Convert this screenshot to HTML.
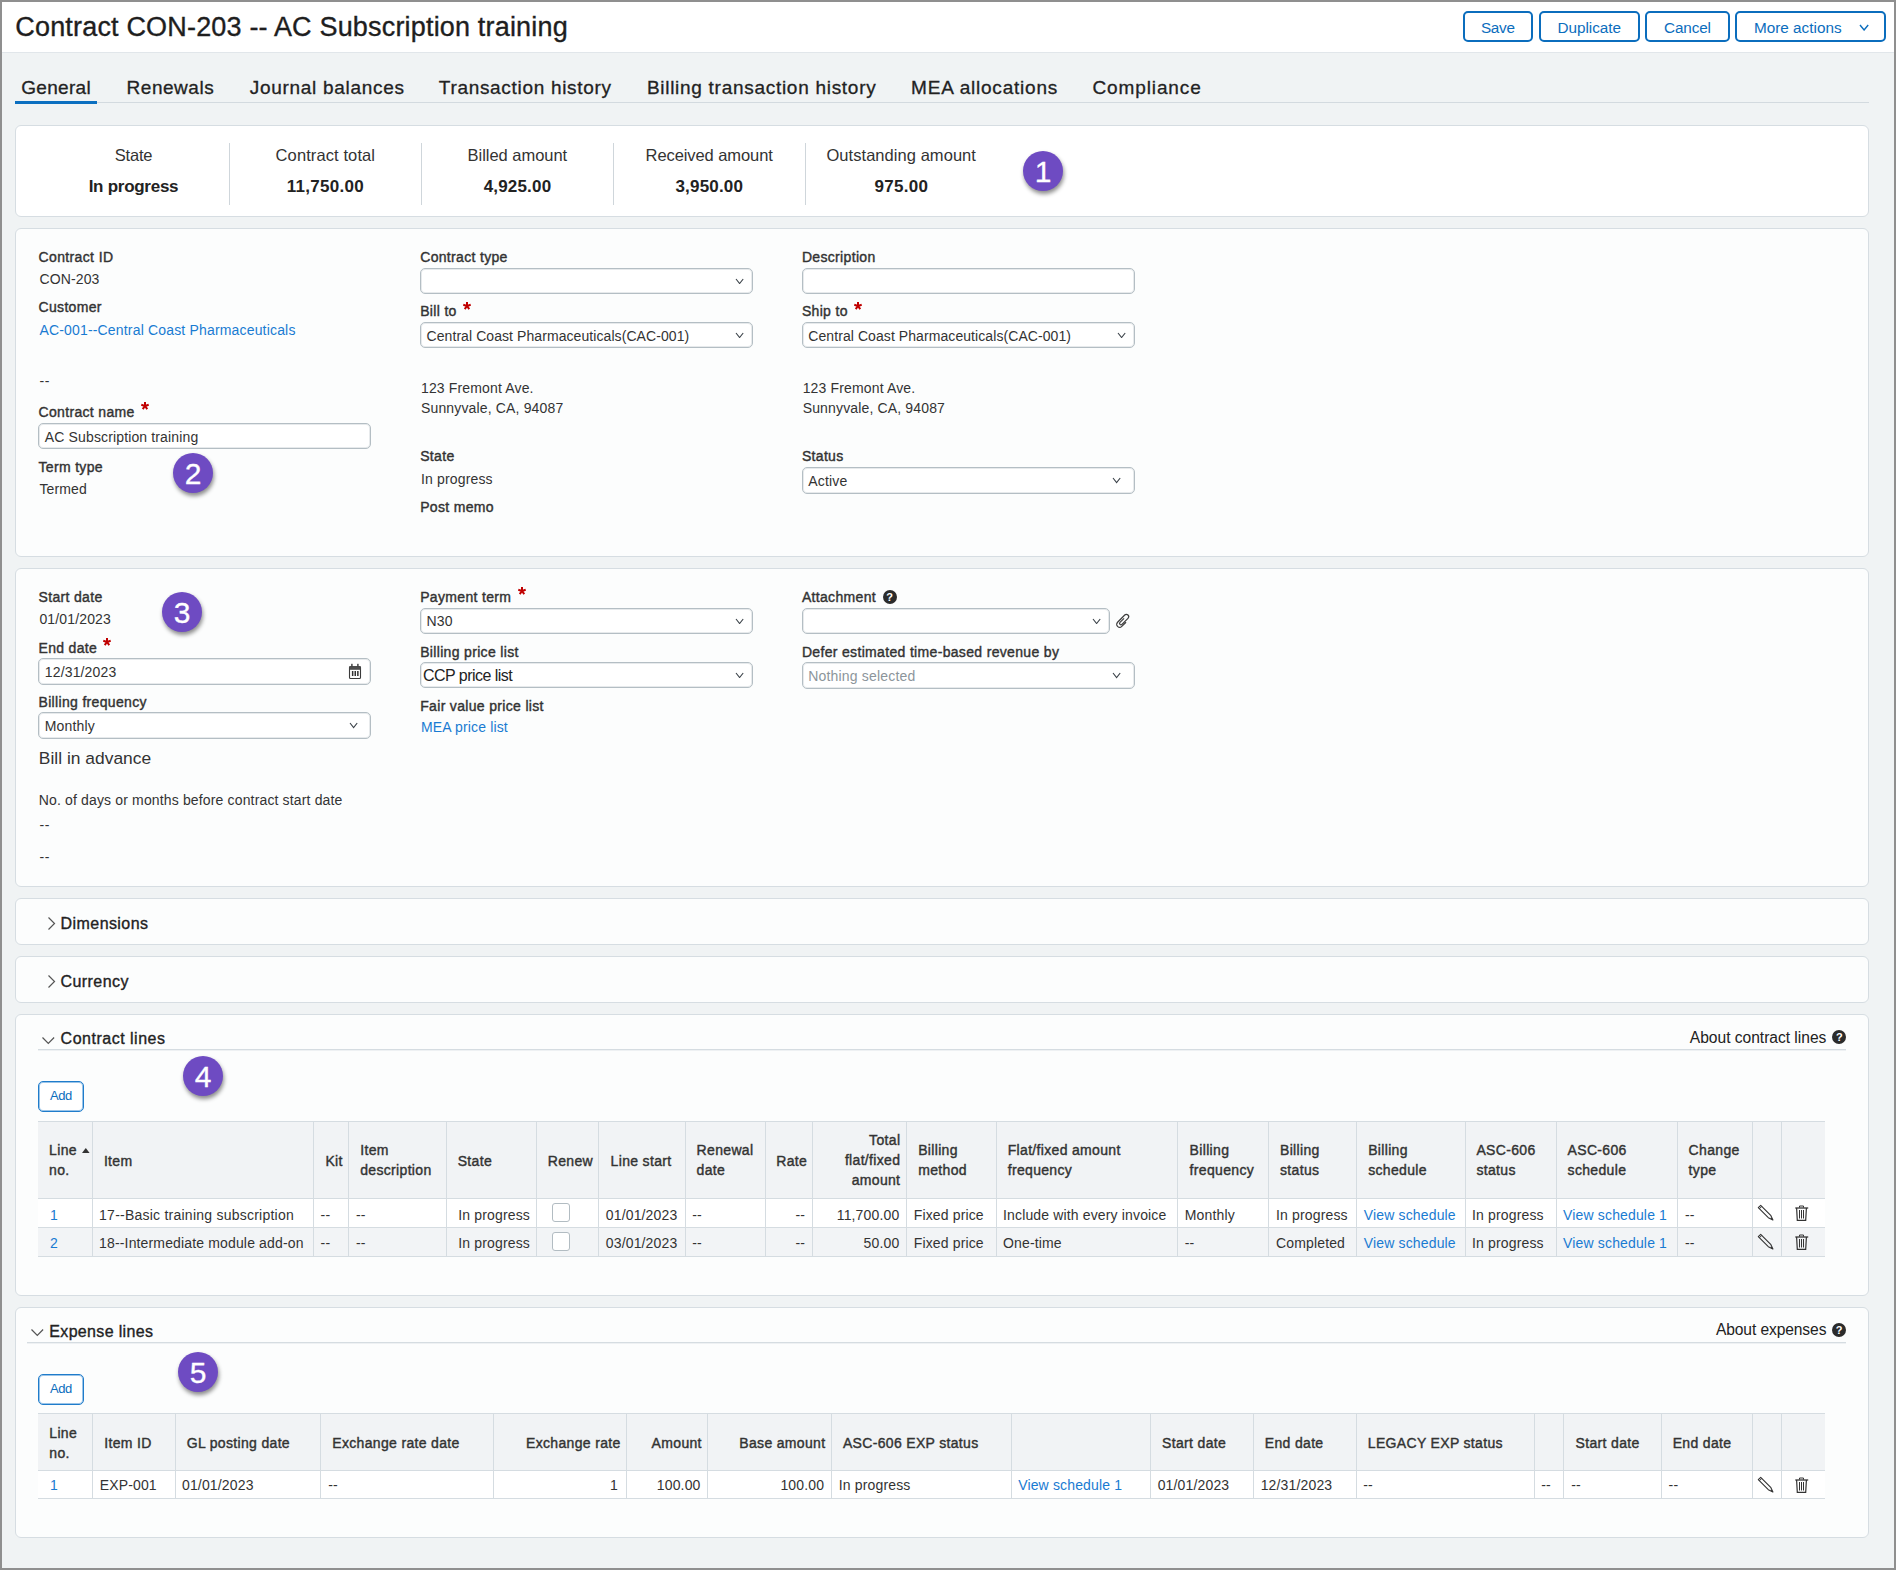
<!DOCTYPE html>
<html><head><meta charset="utf-8"><style>
html,body{margin:0;padding:0;}
body{width:1896px;height:1570px;overflow:hidden;position:relative;background:#8f8f8f;font-family:'Liberation Sans', sans-serif;}
.t{position:absolute;white-space:nowrap;}
</style></head><body>
<div style="position:absolute;left:2px;top:2px;width:1892px;height:1566px;background:#f0f3f4"></div>
<div style="position:absolute;left:2px;top:2px;width:1892px;height:50px;background:#ffffff"></div>
<div style="position:absolute;left:2px;top:52px;width:1892px;height:1px;background:#e1e6ea"></div>
<div style="position:absolute;left:1463px;top:11px;width:70px;height:31px;box-sizing:border-box;border:2px solid #0b6dbd;border-radius:5px;background:#fff"></div>
<div style="position:absolute;left:1539px;top:11px;width:101px;height:31px;box-sizing:border-box;border:2px solid #0b6dbd;border-radius:5px;background:#fff"></div>
<div style="position:absolute;left:1645px;top:11px;width:85px;height:31px;box-sizing:border-box;border:2px solid #0b6dbd;border-radius:5px;background:#fff"></div>
<div style="position:absolute;left:1735px;top:11px;width:151px;height:31px;box-sizing:border-box;border:2px solid #0b6dbd;border-radius:5px;background:#fff"></div>
<svg style="position:absolute;left:1858.7px;top:23.8px" width="10.2" height="7"><polyline points="1,1 5.1,6 9.2,1" fill="none" stroke="#0b6dbd" stroke-width="1.4"/></svg>
<div style="position:absolute;left:15px;top:102px;width:1854px;height:1px;background:#d3dadf"></div>
<div style="position:absolute;left:15px;top:101px;width:82px;height:3px;background:#0b6fc0"></div>
<div style="position:absolute;left:15px;top:125px;width:1854px;height:92px;box-sizing:border-box;background:#ffffff;border:1px solid #d6dde2;border-radius:6px"></div>
<div style="position:absolute;left:229px;top:143px;width:1px;height:62px;background:#cfd6db"></div>
<div style="position:absolute;left:421px;top:143px;width:1px;height:62px;background:#cfd6db"></div>
<div style="position:absolute;left:613px;top:143px;width:1px;height:62px;background:#cfd6db"></div>
<div style="position:absolute;left:805px;top:143px;width:1px;height:62px;background:#cfd6db"></div>
<div style="position:absolute;left:1023px;top:151px;width:40px;height:40px;border-radius:50%;background:#6e4bc2;box-shadow:1px 3px 4px rgba(0,0,0,0.45)"></div>
<div style="position:absolute;left:15px;top:228px;width:1854px;height:329px;box-sizing:border-box;background:#fcfdfd;border:1px solid #d6dde2;border-radius:6px"></div>
<svg style="position:absolute;left:139.8px;top:401.3px" width="10" height="10"><line x1="5" y1="5" x2="5.00" y2="1.10" stroke="#c00000" stroke-width="2" stroke-linecap="butt"/><line x1="5" y1="5" x2="8.71" y2="3.79" stroke="#c00000" stroke-width="2" stroke-linecap="butt"/><line x1="5" y1="5" x2="7.29" y2="8.16" stroke="#c00000" stroke-width="2" stroke-linecap="butt"/><line x1="5" y1="5" x2="2.71" y2="8.16" stroke="#c00000" stroke-width="2" stroke-linecap="butt"/><line x1="5" y1="5" x2="1.29" y2="3.79" stroke="#c00000" stroke-width="2" stroke-linecap="butt"/></svg>
<div style="position:absolute;left:38px;top:423px;width:333px;height:26px;box-sizing:border-box;background:#fff;border:1px solid #b4bec4;border-radius:5px;box-shadow:inset 0 0 0 1px rgba(185,194,200,0.35)"></div>
<div style="position:absolute;left:173px;top:452.6px;width:40px;height:40px;border-radius:50%;background:#6e4bc2;box-shadow:1px 3px 4px rgba(0,0,0,0.45)"></div>
<div style="position:absolute;left:420px;top:268px;width:333px;height:26px;box-sizing:border-box;background:#fff;border:1px solid #b4bec4;border-radius:5px;box-shadow:inset 0 0 0 1px rgba(185,194,200,0.35)"></div>
<svg style="position:absolute;left:734.8px;top:277.8px" width="9.2" height="6.5"><polyline points="1,1 4.6,5.5 8.2,1" fill="none" stroke="#3a4148" stroke-width="1.1"/></svg>
<svg style="position:absolute;left:461.9px;top:300.5px" width="10" height="10"><line x1="5" y1="5" x2="5.00" y2="1.10" stroke="#c00000" stroke-width="2" stroke-linecap="butt"/><line x1="5" y1="5" x2="8.71" y2="3.79" stroke="#c00000" stroke-width="2" stroke-linecap="butt"/><line x1="5" y1="5" x2="7.29" y2="8.16" stroke="#c00000" stroke-width="2" stroke-linecap="butt"/><line x1="5" y1="5" x2="2.71" y2="8.16" stroke="#c00000" stroke-width="2" stroke-linecap="butt"/><line x1="5" y1="5" x2="1.29" y2="3.79" stroke="#c00000" stroke-width="2" stroke-linecap="butt"/></svg>
<div style="position:absolute;left:420px;top:322px;width:333px;height:26px;box-sizing:border-box;background:#fff;border:1px solid #b4bec4;border-radius:5px;box-shadow:inset 0 0 0 1px rgba(185,194,200,0.35)"></div>
<svg style="position:absolute;left:734.8px;top:331.8px" width="9.2" height="6.5"><polyline points="1,1 4.6,5.5 8.2,1" fill="none" stroke="#3a4148" stroke-width="1.1"/></svg>
<div style="position:absolute;left:802px;top:268px;width:333px;height:26px;box-sizing:border-box;background:#fff;border:1px solid #b4bec4;border-radius:5px;box-shadow:inset 0 0 0 1px rgba(185,194,200,0.35)"></div>
<svg style="position:absolute;left:852.6px;top:300.5px" width="10" height="10"><line x1="5" y1="5" x2="5.00" y2="1.10" stroke="#c00000" stroke-width="2" stroke-linecap="butt"/><line x1="5" y1="5" x2="8.71" y2="3.79" stroke="#c00000" stroke-width="2" stroke-linecap="butt"/><line x1="5" y1="5" x2="7.29" y2="8.16" stroke="#c00000" stroke-width="2" stroke-linecap="butt"/><line x1="5" y1="5" x2="2.71" y2="8.16" stroke="#c00000" stroke-width="2" stroke-linecap="butt"/><line x1="5" y1="5" x2="1.29" y2="3.79" stroke="#c00000" stroke-width="2" stroke-linecap="butt"/></svg>
<div style="position:absolute;left:802px;top:322px;width:333px;height:26px;box-sizing:border-box;background:#fff;border:1px solid #b4bec4;border-radius:5px;box-shadow:inset 0 0 0 1px rgba(185,194,200,0.35)"></div>
<svg style="position:absolute;left:1116.5px;top:331.8px" width="9.2" height="6.5"><polyline points="1,1 4.6,5.5 8.2,1" fill="none" stroke="#3a4148" stroke-width="1.1"/></svg>
<div style="position:absolute;left:802px;top:467px;width:333px;height:27px;box-sizing:border-box;background:#fff;border:1px solid #b4bec4;border-radius:5px;box-shadow:inset 0 0 0 1px rgba(185,194,200,0.35)"></div>
<svg style="position:absolute;left:1112px;top:477.3px" width="9.2" height="6.5"><polyline points="1,1 4.6,5.5 8.2,1" fill="none" stroke="#3a4148" stroke-width="1.1"/></svg>
<div style="position:absolute;left:15px;top:568px;width:1854px;height:319px;box-sizing:border-box;background:#fcfdfd;border:1px solid #d6dde2;border-radius:6px"></div>
<div style="position:absolute;left:162px;top:591.5px;width:40px;height:40px;border-radius:50%;background:#6e4bc2;box-shadow:1px 3px 4px rgba(0,0,0,0.45)"></div>
<svg style="position:absolute;left:101.5px;top:637.3000000000001px" width="10" height="10"><line x1="5" y1="5" x2="5.00" y2="1.10" stroke="#c00000" stroke-width="2" stroke-linecap="butt"/><line x1="5" y1="5" x2="8.71" y2="3.79" stroke="#c00000" stroke-width="2" stroke-linecap="butt"/><line x1="5" y1="5" x2="7.29" y2="8.16" stroke="#c00000" stroke-width="2" stroke-linecap="butt"/><line x1="5" y1="5" x2="2.71" y2="8.16" stroke="#c00000" stroke-width="2" stroke-linecap="butt"/><line x1="5" y1="5" x2="1.29" y2="3.79" stroke="#c00000" stroke-width="2" stroke-linecap="butt"/></svg>
<div style="position:absolute;left:38px;top:658px;width:333px;height:27px;box-sizing:border-box;background:#fff;border:1px solid #b4bec4;border-radius:5px;box-shadow:inset 0 0 0 1px rgba(185,194,200,0.35)"></div>
<svg style="position:absolute;left:344px;top:660px" width="22" height="24" viewBox="0 0 22 24">
<rect x="5.5" y="6.5" width="11" height="12" rx="1" fill="none" stroke="#3a3a3a" stroke-width="1.1"/>
<rect x="5.5" y="6" width="11" height="3.8" fill="#4d4d4d"/>
<rect x="7.2" y="3.8" width="1.4" height="2.8" fill="#3a3a3a"/><rect x="13.2" y="3.8" width="1.4" height="2.8" fill="#3a3a3a"/>
<rect x="7.9" y="11" width="1.5" height="5" fill="#333"/><rect x="10.5" y="11" width="1.5" height="5" fill="#333"/><rect x="13.1" y="11" width="1.5" height="5" fill="#333"/>
</svg>
<div style="position:absolute;left:38px;top:712px;width:333px;height:27px;box-sizing:border-box;background:#fff;border:1px solid #b4bec4;border-radius:5px;box-shadow:inset 0 0 0 1px rgba(185,194,200,0.35)"></div>
<svg style="position:absolute;left:348.8px;top:722.3px" width="9.2" height="6.5"><polyline points="1,1 4.6,5.5 8.2,1" fill="none" stroke="#3a4148" stroke-width="1.1"/></svg>
<svg style="position:absolute;left:516.5px;top:586.2px" width="10" height="10"><line x1="5" y1="5" x2="5.00" y2="1.10" stroke="#c00000" stroke-width="2" stroke-linecap="butt"/><line x1="5" y1="5" x2="8.71" y2="3.79" stroke="#c00000" stroke-width="2" stroke-linecap="butt"/><line x1="5" y1="5" x2="7.29" y2="8.16" stroke="#c00000" stroke-width="2" stroke-linecap="butt"/><line x1="5" y1="5" x2="2.71" y2="8.16" stroke="#c00000" stroke-width="2" stroke-linecap="butt"/><line x1="5" y1="5" x2="1.29" y2="3.79" stroke="#c00000" stroke-width="2" stroke-linecap="butt"/></svg>
<div style="position:absolute;left:420px;top:608px;width:333px;height:26px;box-sizing:border-box;background:#fff;border:1px solid #b4bec4;border-radius:5px;box-shadow:inset 0 0 0 1px rgba(185,194,200,0.35)"></div>
<svg style="position:absolute;left:734.8px;top:617.8px" width="9.2" height="6.5"><polyline points="1,1 4.6,5.5 8.2,1" fill="none" stroke="#3a4148" stroke-width="1.1"/></svg>
<div style="position:absolute;left:420px;top:662px;width:333px;height:26px;box-sizing:border-box;background:#fff;border:1px solid #b4bec4;border-radius:5px;box-shadow:inset 0 0 0 1px rgba(185,194,200,0.35)"></div>
<svg style="position:absolute;left:734.8px;top:671.8px" width="9.2" height="6.5"><polyline points="1,1 4.6,5.5 8.2,1" fill="none" stroke="#3a4148" stroke-width="1.1"/></svg>
<div style="position:absolute;left:882.5px;top:590px;width:14px;height:14px;border-radius:50%;background:#2b2b2b"></div>
<div style="position:absolute;left:802px;top:608px;width:307.5px;height:26px;box-sizing:border-box;background:#fff;border:1px solid #b4bec4;border-radius:5px;box-shadow:inset 0 0 0 1px rgba(185,194,200,0.35)"></div>
<svg style="position:absolute;left:1092.3px;top:617.8px" width="9.2" height="6.5"><polyline points="1,1 4.6,5.5 8.2,1" fill="none" stroke="#3a4148" stroke-width="1.1"/></svg>
<svg style="position:absolute;left:1110px;top:606px" width="26" height="28" viewBox="0 0 26 28">
<path transform="translate(13,15) rotate(45) scale(0.92) translate(-3.25,-8.4)" d="M6.5,7 V13.5 A3.25,3.25 0 0 1 0,13.5 V2.5 A2.5,2.5 0 0 1 5,2.5 V11.8 A1.5,1.5 0 0 1 2,11.8 V5.5" fill="none" stroke="#3d3d3d" stroke-width="1.3"/>
</svg>
<div style="position:absolute;left:802px;top:662px;width:333px;height:27px;box-sizing:border-box;background:#fff;border:1px solid #b4bec4;border-radius:5px;box-shadow:inset 0 0 0 1px rgba(185,194,200,0.35)"></div>
<svg style="position:absolute;left:1112px;top:672.3px" width="9.2" height="6.5"><polyline points="1,1 4.6,5.5 8.2,1" fill="none" stroke="#3a4148" stroke-width="1.1"/></svg>
<div style="position:absolute;left:15px;top:898px;width:1854px;height:47px;box-sizing:border-box;background:#fcfdfd;border:1px solid #d6dde2;border-radius:6px"></div>
<svg style="position:absolute;left:46px;top:916px" width="10" height="16"><polyline points="2.5,1.5 8.5,7.5 2.5,13.5" fill="none" stroke="#555" stroke-width="1.2"/></svg>
<div style="position:absolute;left:15px;top:956px;width:1854px;height:47px;box-sizing:border-box;background:#fcfdfd;border:1px solid #d6dde2;border-radius:6px"></div>
<svg style="position:absolute;left:46px;top:974px" width="10" height="16"><polyline points="2.5,1.5 8.5,7.5 2.5,13.5" fill="none" stroke="#555" stroke-width="1.2"/></svg>
<div style="position:absolute;left:15px;top:1014px;width:1854px;height:282px;box-sizing:border-box;background:#fcfdfd;border:1px solid #d6dde2;border-radius:6px"></div>
<svg style="position:absolute;left:41px;top:1036px" width="15" height="10"><polyline points="1.5,1.5 7.3,7.5 13.1,1.5" fill="none" stroke="#555" stroke-width="1.2"/></svg>
<div style="position:absolute;left:38px;top:1049px;width:1808px;height:1px;background:#d5dce1"></div>
<div style="position:absolute;left:38px;top:1050px;width:1808px;height:1px;background:#eef1f3"></div>
<div style="position:absolute;left:1832.3px;top:1030px;width:14px;height:14px;border-radius:50%;background:#2b2b2b"></div>
<div style="position:absolute;left:183px;top:1056px;width:40px;height:40px;border-radius:50%;background:#6e4bc2;box-shadow:1px 3px 4px rgba(0,0,0,0.45)"></div>
<div style="position:absolute;left:38px;top:1081px;width:46px;height:31px;box-sizing:border-box;border:1px solid #1f7ccb;border-radius:5px;background:#fff;box-shadow:inset 0 0 0 1px rgba(31,124,203,0.45)"></div>
<div style="position:absolute;left:38px;top:1121px;width:1787px;height:77px;background:#f1f3f5"></div>
<div style="position:absolute;left:38px;top:1198px;width:1787px;height:29px;background:#ffffff"></div>
<div style="position:absolute;left:38px;top:1227px;width:1787px;height:29px;background:#f2f4f6"></div>
<div style="position:absolute;left:38px;top:1121px;width:1787px;height:1px;background:#d5dce1"></div>
<div style="position:absolute;left:38px;top:1198px;width:1787px;height:1px;background:#d5dce1"></div>
<div style="position:absolute;left:38px;top:1227px;width:1787px;height:1px;background:#d5dce1"></div>
<div style="position:absolute;left:38px;top:1256px;width:1787px;height:1px;background:#d5dce1"></div>
<div style="position:absolute;left:92px;top:1121px;width:1px;height:135px;background:#d5dce1"></div>
<div style="position:absolute;left:313px;top:1121px;width:1px;height:135px;background:#d5dce1"></div>
<div style="position:absolute;left:348px;top:1121px;width:1px;height:135px;background:#d5dce1"></div>
<div style="position:absolute;left:446px;top:1121px;width:1px;height:135px;background:#d5dce1"></div>
<div style="position:absolute;left:536px;top:1121px;width:1px;height:135px;background:#d5dce1"></div>
<div style="position:absolute;left:598px;top:1121px;width:1px;height:135px;background:#d5dce1"></div>
<div style="position:absolute;left:685px;top:1121px;width:1px;height:135px;background:#d5dce1"></div>
<div style="position:absolute;left:765px;top:1121px;width:1px;height:135px;background:#d5dce1"></div>
<div style="position:absolute;left:812px;top:1121px;width:1px;height:135px;background:#d5dce1"></div>
<div style="position:absolute;left:906px;top:1121px;width:1px;height:135px;background:#d5dce1"></div>
<div style="position:absolute;left:996px;top:1121px;width:1px;height:135px;background:#d5dce1"></div>
<div style="position:absolute;left:1177px;top:1121px;width:1px;height:135px;background:#d5dce1"></div>
<div style="position:absolute;left:1268px;top:1121px;width:1px;height:135px;background:#d5dce1"></div>
<div style="position:absolute;left:1356px;top:1121px;width:1px;height:135px;background:#d5dce1"></div>
<div style="position:absolute;left:1465px;top:1121px;width:1px;height:135px;background:#d5dce1"></div>
<div style="position:absolute;left:1556px;top:1121px;width:1px;height:135px;background:#d5dce1"></div>
<div style="position:absolute;left:1677px;top:1121px;width:1px;height:135px;background:#d5dce1"></div>
<div style="position:absolute;left:1752px;top:1121px;width:1px;height:135px;background:#d5dce1"></div>
<div style="position:absolute;left:1781px;top:1121px;width:1px;height:135px;background:#d5dce1"></div>
<svg style="position:absolute;left:81px;top:1147px" width="10" height="7"><polygon points="1,6 4.8,1 8.6,6" fill="#333"/></svg>
<div style="position:absolute;left:552px;top:1203px;width:18px;height:19px;box-sizing:border-box;border:1.5px solid #b2bcc2;border-radius:3px;background:#fff"></div>
<svg style="position:absolute;left:1757px;top:1204px" width="17" height="17" viewBox="0 0 17 17"><path d="M3.7,1.3 L13.7,11.3 L15.9,15.9 L11.3,13.7 L1.3,3.7 Z" fill="none" stroke="#333" stroke-width="1.1" stroke-linejoin="round"/><path d="M2.4,4.8 L4.8,2.4" stroke="#333" stroke-width="1"/><path d="M13.9,14.2 L15.9,15.9 L14.2,13.9 Z" fill="#333" stroke="#333" stroke-width="0.8"/></svg>
<svg style="position:absolute;left:1795px;top:1205px" width="14" height="17" viewBox="0 0 14 17"><path d="M0.3,3 H13.2" stroke="#333" stroke-width="1.3"/><path d="M4.5,2.6 V1 H8.5 V2.6" fill="none" stroke="#333" stroke-width="1"/><path d="M1.6,3 L2.3,15.4 H10.7 L11.4,3" fill="none" stroke="#333" stroke-width="1.2"/><path d="M4.5,5 V13.5 M6.5,5 V13.5 M8.5,5 V13.5" stroke="#333" stroke-width="1"/></svg>
<div style="position:absolute;left:552px;top:1232px;width:18px;height:19px;box-sizing:border-box;border:1.5px solid #b2bcc2;border-radius:3px;background:#fff"></div>
<svg style="position:absolute;left:1757px;top:1233px" width="17" height="17" viewBox="0 0 17 17"><path d="M3.7,1.3 L13.7,11.3 L15.9,15.9 L11.3,13.7 L1.3,3.7 Z" fill="none" stroke="#333" stroke-width="1.1" stroke-linejoin="round"/><path d="M2.4,4.8 L4.8,2.4" stroke="#333" stroke-width="1"/><path d="M13.9,14.2 L15.9,15.9 L14.2,13.9 Z" fill="#333" stroke="#333" stroke-width="0.8"/></svg>
<svg style="position:absolute;left:1795px;top:1234px" width="14" height="17" viewBox="0 0 14 17"><path d="M0.3,3 H13.2" stroke="#333" stroke-width="1.3"/><path d="M4.5,2.6 V1 H8.5 V2.6" fill="none" stroke="#333" stroke-width="1"/><path d="M1.6,3 L2.3,15.4 H10.7 L11.4,3" fill="none" stroke="#333" stroke-width="1.2"/><path d="M4.5,5 V13.5 M6.5,5 V13.5 M8.5,5 V13.5" stroke="#333" stroke-width="1"/></svg>
<div style="position:absolute;left:15px;top:1307px;width:1854px;height:231px;box-sizing:border-box;background:#fcfdfd;border:1px solid #d6dde2;border-radius:6px"></div>
<svg style="position:absolute;left:30px;top:1328px" width="15" height="10"><polyline points="1.5,1.5 7.3,7.5 13.1,1.5" fill="none" stroke="#555" stroke-width="1.2"/></svg>
<div style="position:absolute;left:27px;top:1342px;width:1819px;height:1px;background:#d5dce1"></div>
<div style="position:absolute;left:27px;top:1343px;width:1819px;height:1px;background:#eef1f3"></div>
<div style="position:absolute;left:1832.2px;top:1323px;width:14px;height:14px;border-radius:50%;background:#2b2b2b"></div>
<div style="position:absolute;left:178px;top:1352px;width:40px;height:40px;border-radius:50%;background:#6e4bc2;box-shadow:1px 3px 4px rgba(0,0,0,0.45)"></div>
<div style="position:absolute;left:38px;top:1374px;width:46px;height:31px;box-sizing:border-box;border:1px solid #1f7ccb;border-radius:5px;background:#fff;box-shadow:inset 0 0 0 1px rgba(31,124,203,0.45)"></div>
<div style="position:absolute;left:38px;top:1413px;width:1787px;height:57px;background:#f1f3f5"></div>
<div style="position:absolute;left:38px;top:1470px;width:1787px;height:28px;background:#ffffff"></div>
<div style="position:absolute;left:38px;top:1413px;width:1787px;height:1px;background:#d5dce1"></div>
<div style="position:absolute;left:38px;top:1470px;width:1787px;height:1px;background:#d5dce1"></div>
<div style="position:absolute;left:38px;top:1498px;width:1787px;height:1px;background:#d5dce1"></div>
<div style="position:absolute;left:92px;top:1413px;width:1px;height:85px;background:#d5dce1"></div>
<div style="position:absolute;left:175px;top:1413px;width:1px;height:85px;background:#d5dce1"></div>
<div style="position:absolute;left:320px;top:1413px;width:1px;height:85px;background:#d5dce1"></div>
<div style="position:absolute;left:493px;top:1413px;width:1px;height:85px;background:#d5dce1"></div>
<div style="position:absolute;left:626px;top:1413px;width:1px;height:85px;background:#d5dce1"></div>
<div style="position:absolute;left:707px;top:1413px;width:1px;height:85px;background:#d5dce1"></div>
<div style="position:absolute;left:831px;top:1413px;width:1px;height:85px;background:#d5dce1"></div>
<div style="position:absolute;left:1011px;top:1413px;width:1px;height:85px;background:#d5dce1"></div>
<div style="position:absolute;left:1150px;top:1413px;width:1px;height:85px;background:#d5dce1"></div>
<div style="position:absolute;left:1253px;top:1413px;width:1px;height:85px;background:#d5dce1"></div>
<div style="position:absolute;left:1356px;top:1413px;width:1px;height:85px;background:#d5dce1"></div>
<div style="position:absolute;left:1534px;top:1413px;width:1px;height:85px;background:#d5dce1"></div>
<div style="position:absolute;left:1563px;top:1413px;width:1px;height:85px;background:#d5dce1"></div>
<div style="position:absolute;left:1661px;top:1413px;width:1px;height:85px;background:#d5dce1"></div>
<div style="position:absolute;left:1752px;top:1413px;width:1px;height:85px;background:#d5dce1"></div>
<div style="position:absolute;left:1781px;top:1413px;width:1px;height:85px;background:#d5dce1"></div>
<svg style="position:absolute;left:1757px;top:1476px" width="17" height="17" viewBox="0 0 17 17"><path d="M3.7,1.3 L13.7,11.3 L15.9,15.9 L11.3,13.7 L1.3,3.7 Z" fill="none" stroke="#333" stroke-width="1.1" stroke-linejoin="round"/><path d="M2.4,4.8 L4.8,2.4" stroke="#333" stroke-width="1"/><path d="M13.9,14.2 L15.9,15.9 L14.2,13.9 Z" fill="#333" stroke="#333" stroke-width="0.8"/></svg>
<svg style="position:absolute;left:1795px;top:1477px" width="14" height="17" viewBox="0 0 14 17"><path d="M0.3,3 H13.2" stroke="#333" stroke-width="1.3"/><path d="M4.5,2.6 V1 H8.5 V2.6" fill="none" stroke="#333" stroke-width="1"/><path d="M1.6,3 L2.3,15.4 H10.7 L11.4,3" fill="none" stroke="#333" stroke-width="1.2"/><path d="M4.5,5 V13.5 M6.5,5 V13.5 M8.5,5 V13.5" stroke="#333" stroke-width="1"/></svg>
<div class="t" style="left:15.30px;top:14px;font-size:27px;line-height:27px;color:#1e1e1e;letter-spacing:0.178px;-webkit-text-stroke:0.35px #1e1e1e;">Contract CON-203 -- AC Subscription training</div>
<div class="t" style="left:1480.90px;top:20px;font-size:15.3px;line-height:15.3px;color:#0b6dbd;letter-spacing:-0.256px;">Save</div>
<div class="t" style="left:1557.40px;top:20px;font-size:15.3px;line-height:15.3px;color:#0b6dbd;letter-spacing:-0.011px;">Duplicate</div>
<div class="t" style="left:1664.10px;top:20px;font-size:15.3px;line-height:15.3px;color:#0b6dbd;letter-spacing:-0.146px;">Cancel</div>
<div class="t" style="left:1753.90px;top:20px;font-size:15.3px;line-height:15.3px;color:#0b6dbd;letter-spacing:0.010px;">More actions</div>
<div class="t" style="left:21.20px;top:78px;font-size:19px;line-height:19px;color:#222222;letter-spacing:0.316px;-webkit-text-stroke:0.3px #222;">General</div>
<div class="t" style="left:126.60px;top:78px;font-size:19px;line-height:19px;color:#222222;letter-spacing:0.524px;-webkit-text-stroke:0.3px #222;">Renewals</div>
<div class="t" style="left:249.80px;top:78px;font-size:19px;line-height:19px;color:#222222;letter-spacing:0.703px;-webkit-text-stroke:0.3px #222;">Journal balances</div>
<div class="t" style="left:438.80px;top:78px;font-size:19px;line-height:19px;color:#222222;letter-spacing:0.688px;-webkit-text-stroke:0.3px #222;">Transaction history</div>
<div class="t" style="left:646.90px;top:78px;font-size:19px;line-height:19px;color:#222222;letter-spacing:0.717px;-webkit-text-stroke:0.3px #222;">Billing transaction history</div>
<div class="t" style="left:911.10px;top:78px;font-size:19px;line-height:19px;color:#222222;letter-spacing:0.787px;-webkit-text-stroke:0.3px #222;">MEA allocations</div>
<div class="t" style="left:1092.50px;top:78px;font-size:19px;line-height:19px;color:#222222;letter-spacing:0.876px;-webkit-text-stroke:0.3px #222;">Compliance</div>
<div class="t" style="left:114.75px;top:147px;font-size:16.5px;line-height:16.5px;color:#333333;letter-spacing:-0.207px;">State</div>
<div class="t" style="left:88.65px;top:178px;font-size:17px;line-height:17px;color:#222222;font-weight:700;letter-spacing:-0.268px;">In progress</div>
<div class="t" style="left:275.60px;top:147px;font-size:16.5px;line-height:16.5px;color:#333333;letter-spacing:0.098px;">Contract total</div>
<div class="t" style="left:286.80px;top:178px;font-size:17px;line-height:17px;color:#222222;font-weight:700;letter-spacing:0.288px;">11,750.00</div>
<div class="t" style="left:467.60px;top:147px;font-size:16.5px;line-height:16.5px;color:#333333;letter-spacing:-0.031px;">Billed amount</div>
<div class="t" style="left:483.65px;top:178px;font-size:17px;line-height:17px;color:#222222;font-weight:700;letter-spacing:0.188px;">4,925.00</div>
<div class="t" style="left:645.55px;top:147px;font-size:16.5px;line-height:16.5px;color:#333333;letter-spacing:-0.079px;">Received amount</div>
<div class="t" style="left:675.40px;top:178px;font-size:17px;line-height:17px;color:#222222;font-weight:700;letter-spacing:0.203px;">3,950.00</div>
<div class="t" style="left:826.45px;top:147px;font-size:16.5px;line-height:16.5px;color:#333333;letter-spacing:0.053px;">Outstanding amount</div>
<div class="t" style="left:874.40px;top:178px;font-size:17px;line-height:17px;color:#222222;font-weight:700;letter-spacing:0.319px;">975.00</div>
<div class="t" style="left:1034.66px;top:157px;font-size:30px;line-height:30px;color:#fff;-webkit-text-stroke:0.3px #fff;">1</div>
<div class="t" style="left:38.50px;top:250px;font-size:14px;line-height:14px;color:#333333;letter-spacing:0.370px;-webkit-text-stroke:0.4px #333333;">Contract ID</div>
<div class="t" style="left:39.40px;top:272px;font-size:14px;line-height:14px;color:#333333;letter-spacing:0.144px;">CON-203</div>
<div class="t" style="left:38.50px;top:300px;font-size:14px;line-height:14px;color:#333333;letter-spacing:0.330px;-webkit-text-stroke:0.4px #333333;">Customer</div>
<div class="t" style="left:39.40px;top:323px;font-size:14px;line-height:14px;color:#197bd2;letter-spacing:0.173px;">AC-001--Central Coast Pharmaceuticals</div>
<div class="t" style="left:39.40px;top:374px;font-size:14px;line-height:14px;color:#333333;letter-spacing:0.676px;">--</div>
<div class="t" style="left:38.50px;top:405px;font-size:14px;line-height:14px;color:#333333;letter-spacing:0.330px;-webkit-text-stroke:0.4px #333333;">Contract name</div>
<div class="t" style="left:44.80px;top:430px;font-size:14px;line-height:14px;color:#333333;letter-spacing:0.139px;">AC Subscription training</div>
<div class="t" style="left:38.50px;top:460px;font-size:14px;line-height:14px;color:#333333;letter-spacing:0.330px;-webkit-text-stroke:0.4px #333333;">Term type</div>
<div class="t" style="left:39.40px;top:482px;font-size:14px;line-height:14px;color:#333333;letter-spacing:0.150px;">Termed</div>
<div class="t" style="left:184.66px;top:459px;font-size:30px;line-height:30px;color:#fff;-webkit-text-stroke:0.3px #fff;">2</div>
<div class="t" style="left:420.20px;top:250px;font-size:14px;line-height:14px;color:#333333;letter-spacing:0.330px;-webkit-text-stroke:0.4px #333333;">Contract type</div>
<div class="t" style="left:420.20px;top:304px;font-size:14px;line-height:14px;color:#333333;letter-spacing:0.330px;-webkit-text-stroke:0.4px #333333;">Bill to</div>
<div class="t" style="left:426.50px;top:329px;font-size:14px;line-height:14px;color:#333333;letter-spacing:0.076px;">Central Coast Pharmaceuticals(CAC-001)</div>
<div class="t" style="left:421.00px;top:381px;font-size:14px;line-height:14px;color:#333333;letter-spacing:0.150px;">123 Fremont Ave.</div>
<div class="t" style="left:421.00px;top:401px;font-size:14px;line-height:14px;color:#333333;letter-spacing:0.150px;">Sunnyvale, CA, 94087</div>
<div class="t" style="left:420.20px;top:449px;font-size:14px;line-height:14px;color:#333333;letter-spacing:0.330px;-webkit-text-stroke:0.4px #333333;">State</div>
<div class="t" style="left:421.00px;top:472px;font-size:14px;line-height:14px;color:#333333;letter-spacing:0.150px;">In progress</div>
<div class="t" style="left:420.20px;top:500px;font-size:14px;line-height:14px;color:#333333;letter-spacing:0.330px;-webkit-text-stroke:0.4px #333333;">Post memo</div>
<div class="t" style="left:801.90px;top:250px;font-size:14px;line-height:14px;color:#333333;letter-spacing:0.330px;-webkit-text-stroke:0.4px #333333;">Description</div>
<div class="t" style="left:801.90px;top:304px;font-size:14px;line-height:14px;color:#333333;letter-spacing:0.330px;-webkit-text-stroke:0.4px #333333;">Ship to</div>
<div class="t" style="left:808.30px;top:329px;font-size:14px;line-height:14px;color:#333333;letter-spacing:0.076px;">Central Coast Pharmaceuticals(CAC-001)</div>
<div class="t" style="left:802.70px;top:381px;font-size:14px;line-height:14px;color:#333333;letter-spacing:0.150px;">123 Fremont Ave.</div>
<div class="t" style="left:802.70px;top:401px;font-size:14px;line-height:14px;color:#333333;letter-spacing:0.150px;">Sunnyvale, CA, 94087</div>
<div class="t" style="left:801.90px;top:449px;font-size:14px;line-height:14px;color:#333333;letter-spacing:0.330px;-webkit-text-stroke:0.4px #333333;">Status</div>
<div class="t" style="left:808.30px;top:474px;font-size:14px;line-height:14px;color:#333333;letter-spacing:0.150px;">Active</div>
<div class="t" style="left:38.50px;top:590px;font-size:14px;line-height:14px;color:#333333;letter-spacing:0.330px;-webkit-text-stroke:0.4px #333333;">Start date</div>
<div class="t" style="left:39.40px;top:612px;font-size:14px;line-height:14px;color:#333333;letter-spacing:0.150px;">01/01/2023</div>
<div class="t" style="left:173.66px;top:598px;font-size:30px;line-height:30px;color:#fff;-webkit-text-stroke:0.3px #fff;">3</div>
<div class="t" style="left:38.50px;top:641px;font-size:14px;line-height:14px;color:#333333;letter-spacing:0.330px;-webkit-text-stroke:0.4px #333333;">End date</div>
<div class="t" style="left:44.80px;top:665px;font-size:14px;line-height:14px;color:#333333;letter-spacing:0.150px;">12/31/2023</div>
<div class="t" style="left:38.50px;top:695px;font-size:14px;line-height:14px;color:#333333;letter-spacing:0.330px;-webkit-text-stroke:0.4px #333333;">Billing frequency</div>
<div class="t" style="left:44.80px;top:719px;font-size:14px;line-height:14px;color:#333333;letter-spacing:0.150px;">Monthly</div>
<div class="t" style="left:38.80px;top:750px;font-size:17.4px;line-height:17.4px;color:#333333;letter-spacing:0.015px;">Bill in advance</div>
<div class="t" style="left:38.80px;top:793px;font-size:14px;line-height:14px;color:#333333;letter-spacing:0.150px;">No. of days or months before contract start date</div>
<div class="t" style="left:39.40px;top:818px;font-size:14px;line-height:14px;color:#333333;letter-spacing:0.676px;">--</div>
<div class="t" style="left:39.40px;top:850px;font-size:14px;line-height:14px;color:#333333;letter-spacing:0.676px;">--</div>
<div class="t" style="left:420.20px;top:590px;font-size:14px;line-height:14px;color:#333333;letter-spacing:0.330px;-webkit-text-stroke:0.4px #333333;">Payment term</div>
<div class="t" style="left:426.50px;top:614px;font-size:14px;line-height:14px;color:#333333;letter-spacing:0.150px;">N30</div>
<div class="t" style="left:420.20px;top:645px;font-size:14px;line-height:14px;color:#333333;letter-spacing:0.330px;-webkit-text-stroke:0.4px #333333;">Billing price list</div>
<div class="t" style="left:423.00px;top:668px;font-size:16px;line-height:16px;color:#222222;letter-spacing:-0.533px;">CCP price list</div>
<div class="t" style="left:420.20px;top:699px;font-size:14px;line-height:14px;color:#333333;letter-spacing:0.330px;-webkit-text-stroke:0.4px #333333;">Fair value price list</div>
<div class="t" style="left:421.00px;top:720px;font-size:14px;line-height:14px;color:#197bd2;letter-spacing:0.150px;">MEA price list</div>
<div class="t" style="left:801.90px;top:590px;font-size:14px;line-height:14px;color:#333333;letter-spacing:0.330px;-webkit-text-stroke:0.4px #333333;">Attachment</div>
<div class="t" style="left:886.14px;top:592px;font-size:11px;line-height:11px;color:#fff;font-weight:700;">?</div>
<div class="t" style="left:801.90px;top:645px;font-size:14px;line-height:14px;color:#333333;letter-spacing:0.330px;-webkit-text-stroke:0.4px #333333;">Defer estimated time-based revenue by</div>
<div class="t" style="left:808.30px;top:669px;font-size:14px;line-height:14px;color:#8c959b;letter-spacing:0.174px;">Nothing selected</div>
<div class="t" style="left:60.60px;top:916px;font-size:16px;line-height:16px;color:#222222;letter-spacing:0.424px;-webkit-text-stroke:0.35px #222;">Dimensions</div>
<div class="t" style="left:60.60px;top:974px;font-size:16px;line-height:16px;color:#222222;letter-spacing:0.413px;-webkit-text-stroke:0.35px #222;">Currency</div>
<div class="t" style="left:60.60px;top:1031px;font-size:16px;line-height:16px;color:#222222;letter-spacing:0.506px;-webkit-text-stroke:0.35px #222;">Contract lines</div>
<div class="t" style="left:1689.80px;top:1030px;font-size:15.6px;line-height:15.6px;color:#222222;letter-spacing:-0.022px;">About contract lines</div>
<div class="t" style="left:1835.94px;top:1032px;font-size:11px;line-height:11px;color:#fff;font-weight:700;">?</div>
<div class="t" style="left:194.66px;top:1062px;font-size:30px;line-height:30px;color:#fff;-webkit-text-stroke:0.3px #fff;">4</div>
<div class="t" style="left:50.00px;top:1089px;font-size:13px;line-height:13px;color:#0b6dbd;letter-spacing:-0.463px;">Add</div>
<div class="t" style="left:49.10px;top:1143px;font-size:14px;line-height:14px;color:#333333;letter-spacing:0.330px;-webkit-text-stroke:0.4px #333333;">Line</div>
<div class="t" style="left:49.10px;top:1163px;font-size:14px;line-height:14px;color:#333333;letter-spacing:0.330px;-webkit-text-stroke:0.4px #333333;">no.</div>
<div class="t" style="left:103.90px;top:1154px;font-size:14px;line-height:14px;color:#333333;letter-spacing:0.330px;-webkit-text-stroke:0.4px #333333;">Item</div>
<div class="t" style="left:325.40px;top:1154px;font-size:14px;line-height:14px;color:#333333;letter-spacing:0.330px;-webkit-text-stroke:0.4px #333333;">Kit</div>
<div class="t" style="left:360.20px;top:1143px;font-size:14px;line-height:14px;color:#333333;letter-spacing:0.330px;-webkit-text-stroke:0.4px #333333;">Item</div>
<div class="t" style="left:360.20px;top:1163px;font-size:14px;line-height:14px;color:#333333;letter-spacing:0.330px;-webkit-text-stroke:0.4px #333333;">description</div>
<div class="t" style="left:457.70px;top:1154px;font-size:14px;line-height:14px;color:#333333;letter-spacing:0.330px;-webkit-text-stroke:0.4px #333333;">State</div>
<div class="t" style="left:547.80px;top:1154px;font-size:14px;line-height:14px;color:#333333;letter-spacing:0.330px;-webkit-text-stroke:0.4px #333333;">Renew</div>
<div class="t" style="left:610.60px;top:1154px;font-size:14px;line-height:14px;color:#333333;letter-spacing:0.330px;-webkit-text-stroke:0.4px #333333;">Line start</div>
<div class="t" style="left:696.60px;top:1143px;font-size:14px;line-height:14px;color:#333333;letter-spacing:0.330px;-webkit-text-stroke:0.4px #333333;">Renewal</div>
<div class="t" style="left:696.60px;top:1163px;font-size:14px;line-height:14px;color:#333333;letter-spacing:0.330px;-webkit-text-stroke:0.4px #333333;">date</div>
<div class="t" style="left:776.24px;top:1154px;font-size:14px;line-height:14px;color:#333333;letter-spacing:0.330px;-webkit-text-stroke:0.4px #333333;">Rate</div>
<div class="t" style="left:869.11px;top:1133px;font-size:14px;line-height:14px;color:#333333;letter-spacing:0.330px;-webkit-text-stroke:0.4px #333333;">Total</div>
<div class="t" style="left:844.89px;top:1153px;font-size:14px;line-height:14px;color:#333333;letter-spacing:0.330px;-webkit-text-stroke:0.4px #333333;">flat/fixed</div>
<div class="t" style="left:851.66px;top:1173px;font-size:14px;line-height:14px;color:#333333;letter-spacing:0.330px;-webkit-text-stroke:0.4px #333333;">amount</div>
<div class="t" style="left:918.20px;top:1143px;font-size:14px;line-height:14px;color:#333333;letter-spacing:0.330px;-webkit-text-stroke:0.4px #333333;">Billing</div>
<div class="t" style="left:918.20px;top:1163px;font-size:14px;line-height:14px;color:#333333;letter-spacing:0.330px;-webkit-text-stroke:0.4px #333333;">method</div>
<div class="t" style="left:1007.70px;top:1143px;font-size:14px;line-height:14px;color:#333333;letter-spacing:0.330px;-webkit-text-stroke:0.4px #333333;">Flat/fixed amount</div>
<div class="t" style="left:1007.70px;top:1163px;font-size:14px;line-height:14px;color:#333333;letter-spacing:0.330px;-webkit-text-stroke:0.4px #333333;">frequency</div>
<div class="t" style="left:1189.60px;top:1143px;font-size:14px;line-height:14px;color:#333333;letter-spacing:0.330px;-webkit-text-stroke:0.4px #333333;">Billing</div>
<div class="t" style="left:1189.60px;top:1163px;font-size:14px;line-height:14px;color:#333333;letter-spacing:0.330px;-webkit-text-stroke:0.4px #333333;">frequency</div>
<div class="t" style="left:1280.00px;top:1143px;font-size:14px;line-height:14px;color:#333333;letter-spacing:0.330px;-webkit-text-stroke:0.4px #333333;">Billing</div>
<div class="t" style="left:1280.00px;top:1163px;font-size:14px;line-height:14px;color:#333333;letter-spacing:0.330px;-webkit-text-stroke:0.4px #333333;">status</div>
<div class="t" style="left:1368.20px;top:1143px;font-size:14px;line-height:14px;color:#333333;letter-spacing:0.330px;-webkit-text-stroke:0.4px #333333;">Billing</div>
<div class="t" style="left:1368.20px;top:1163px;font-size:14px;line-height:14px;color:#333333;letter-spacing:0.330px;-webkit-text-stroke:0.4px #333333;">schedule</div>
<div class="t" style="left:1476.40px;top:1143px;font-size:14px;line-height:14px;color:#333333;letter-spacing:0.330px;-webkit-text-stroke:0.4px #333333;">ASC-606</div>
<div class="t" style="left:1476.40px;top:1163px;font-size:14px;line-height:14px;color:#333333;letter-spacing:0.330px;-webkit-text-stroke:0.4px #333333;">status</div>
<div class="t" style="left:1567.60px;top:1143px;font-size:14px;line-height:14px;color:#333333;letter-spacing:0.330px;-webkit-text-stroke:0.4px #333333;">ASC-606</div>
<div class="t" style="left:1567.60px;top:1163px;font-size:14px;line-height:14px;color:#333333;letter-spacing:0.330px;-webkit-text-stroke:0.4px #333333;">schedule</div>
<div class="t" style="left:1688.60px;top:1143px;font-size:14px;line-height:14px;color:#333333;letter-spacing:0.330px;-webkit-text-stroke:0.4px #333333;">Change</div>
<div class="t" style="left:1688.60px;top:1163px;font-size:14px;line-height:14px;color:#333333;letter-spacing:0.330px;-webkit-text-stroke:0.4px #333333;">type</div>
<div class="t" style="left:50.00px;top:1208px;font-size:14px;line-height:14px;color:#197bd2;">1</div>
<div class="t" style="left:99.10px;top:1208px;font-size:14px;line-height:14px;color:#333333;letter-spacing:0.236px;">17--Basic training subscription</div>
<div class="t" style="left:320.60px;top:1208px;font-size:14px;line-height:14px;color:#333333;letter-spacing:0.150px;">--</div>
<div class="t" style="left:356.00px;top:1208px;font-size:14px;line-height:14px;color:#333333;letter-spacing:0.150px;">--</div>
<div class="t" style="left:458.30px;top:1208px;font-size:14px;line-height:14px;color:#333333;letter-spacing:0.150px;">In progress</div>
<div class="t" style="left:605.80px;top:1208px;font-size:14px;line-height:14px;color:#333333;letter-spacing:0.150px;">01/01/2023</div>
<div class="t" style="left:692.20px;top:1208px;font-size:14px;line-height:14px;color:#333333;letter-spacing:0.150px;">--</div>
<div class="t" style="left:795.53px;top:1208px;font-size:14px;line-height:14px;color:#333333;letter-spacing:0.150px;">--</div>
<div class="t" style="left:836.75px;top:1208px;font-size:14px;line-height:14px;color:#333333;letter-spacing:0.150px;">11,700.00</div>
<div class="t" style="left:913.70px;top:1208px;font-size:14px;line-height:14px;color:#333333;letter-spacing:0.150px;">Fixed price</div>
<div class="t" style="left:1003.00px;top:1208px;font-size:14px;line-height:14px;color:#333333;letter-spacing:0.150px;">Include with every invoice</div>
<div class="t" style="left:1184.80px;top:1208px;font-size:14px;line-height:14px;color:#333333;letter-spacing:0.150px;">Monthly</div>
<div class="t" style="left:1276.00px;top:1208px;font-size:14px;line-height:14px;color:#333333;letter-spacing:0.150px;">In progress</div>
<div class="t" style="left:1363.80px;top:1208px;font-size:14px;line-height:14px;color:#197bd2;letter-spacing:0.150px;">View schedule</div>
<div class="t" style="left:1472.00px;top:1208px;font-size:14px;line-height:14px;color:#333333;letter-spacing:0.150px;">In progress</div>
<div class="t" style="left:1563.10px;top:1208px;font-size:14px;line-height:14px;color:#197bd2;letter-spacing:0.150px;">View schedule 1</div>
<div class="t" style="left:1685.00px;top:1208px;font-size:14px;line-height:14px;color:#333333;letter-spacing:0.150px;">--</div>
<div class="t" style="left:50.00px;top:1236px;font-size:14px;line-height:14px;color:#197bd2;">2</div>
<div class="t" style="left:99.10px;top:1236px;font-size:14px;line-height:14px;color:#333333;letter-spacing:0.150px;">18--Intermediate module add-on</div>
<div class="t" style="left:320.60px;top:1236px;font-size:14px;line-height:14px;color:#333333;letter-spacing:0.150px;">--</div>
<div class="t" style="left:356.00px;top:1236px;font-size:14px;line-height:14px;color:#333333;letter-spacing:0.150px;">--</div>
<div class="t" style="left:458.30px;top:1236px;font-size:14px;line-height:14px;color:#333333;letter-spacing:0.150px;">In progress</div>
<div class="t" style="left:605.80px;top:1236px;font-size:14px;line-height:14px;color:#333333;letter-spacing:0.150px;">03/01/2023</div>
<div class="t" style="left:692.20px;top:1236px;font-size:14px;line-height:14px;color:#333333;letter-spacing:0.150px;">--</div>
<div class="t" style="left:795.53px;top:1236px;font-size:14px;line-height:14px;color:#333333;letter-spacing:0.150px;">--</div>
<div class="t" style="left:863.57px;top:1236px;font-size:14px;line-height:14px;color:#333333;letter-spacing:0.150px;">50.00</div>
<div class="t" style="left:913.70px;top:1236px;font-size:14px;line-height:14px;color:#333333;letter-spacing:0.150px;">Fixed price</div>
<div class="t" style="left:1003.00px;top:1236px;font-size:14px;line-height:14px;color:#333333;letter-spacing:0.150px;">One-time</div>
<div class="t" style="left:1184.80px;top:1236px;font-size:14px;line-height:14px;color:#333333;letter-spacing:0.150px;">--</div>
<div class="t" style="left:1276.00px;top:1236px;font-size:14px;line-height:14px;color:#333333;letter-spacing:0.150px;">Completed</div>
<div class="t" style="left:1363.80px;top:1236px;font-size:14px;line-height:14px;color:#197bd2;letter-spacing:0.150px;">View schedule</div>
<div class="t" style="left:1472.00px;top:1236px;font-size:14px;line-height:14px;color:#333333;letter-spacing:0.150px;">In progress</div>
<div class="t" style="left:1563.10px;top:1236px;font-size:14px;line-height:14px;color:#197bd2;letter-spacing:0.150px;">View schedule 1</div>
<div class="t" style="left:1685.00px;top:1236px;font-size:14px;line-height:14px;color:#333333;letter-spacing:0.150px;">--</div>
<div class="t" style="left:49.30px;top:1324px;font-size:16px;line-height:16px;color:#222222;letter-spacing:0.332px;-webkit-text-stroke:0.35px #222;">Expense lines</div>
<div class="t" style="left:1715.90px;top:1322px;font-size:15.6px;line-height:15.6px;color:#222222;letter-spacing:-0.099px;">About expenses</div>
<div class="t" style="left:1835.84px;top:1325px;font-size:11px;line-height:11px;color:#fff;font-weight:700;">?</div>
<div class="t" style="left:189.66px;top:1358px;font-size:30px;line-height:30px;color:#fff;-webkit-text-stroke:0.3px #fff;">5</div>
<div class="t" style="left:50.00px;top:1382px;font-size:13px;line-height:13px;color:#0b6dbd;letter-spacing:-0.463px;">Add</div>
<div class="t" style="left:49.30px;top:1426px;font-size:14px;line-height:14px;color:#333333;letter-spacing:0.330px;-webkit-text-stroke:0.4px #333333;">Line</div>
<div class="t" style="left:49.30px;top:1446px;font-size:14px;line-height:14px;color:#333333;letter-spacing:0.330px;-webkit-text-stroke:0.4px #333333;">no.</div>
<div class="t" style="left:104.20px;top:1436px;font-size:14px;line-height:14px;color:#333333;letter-spacing:0.330px;-webkit-text-stroke:0.4px #333333;">Item ID</div>
<div class="t" style="left:186.70px;top:1436px;font-size:14px;line-height:14px;color:#333333;letter-spacing:0.330px;-webkit-text-stroke:0.4px #333333;">GL posting date</div>
<div class="t" style="left:332.30px;top:1436px;font-size:14px;line-height:14px;color:#333333;letter-spacing:0.330px;-webkit-text-stroke:0.4px #333333;">Exchange rate date</div>
<div class="t" style="left:526.05px;top:1436px;font-size:14px;line-height:14px;color:#333333;letter-spacing:0.330px;-webkit-text-stroke:0.4px #333333;">Exchange rate</div>
<div class="t" style="left:651.61px;top:1436px;font-size:14px;line-height:14px;color:#333333;letter-spacing:0.330px;-webkit-text-stroke:0.4px #333333;">Amount</div>
<div class="t" style="left:739.30px;top:1436px;font-size:14px;line-height:14px;color:#333333;letter-spacing:0.330px;-webkit-text-stroke:0.4px #333333;">Base amount</div>
<div class="t" style="left:842.90px;top:1436px;font-size:14px;line-height:14px;color:#333333;letter-spacing:0.330px;-webkit-text-stroke:0.4px #333333;">ASC-606 EXP status</div>
<div class="t" style="left:1162.10px;top:1436px;font-size:14px;line-height:14px;color:#333333;letter-spacing:0.330px;-webkit-text-stroke:0.4px #333333;">Start date</div>
<div class="t" style="left:1264.80px;top:1436px;font-size:14px;line-height:14px;color:#333333;letter-spacing:0.330px;-webkit-text-stroke:0.4px #333333;">End date</div>
<div class="t" style="left:1367.80px;top:1436px;font-size:14px;line-height:14px;color:#333333;letter-spacing:0.330px;-webkit-text-stroke:0.4px #333333;">LEGACY EXP status</div>
<div class="t" style="left:1575.60px;top:1436px;font-size:14px;line-height:14px;color:#333333;letter-spacing:0.330px;-webkit-text-stroke:0.4px #333333;">Start date</div>
<div class="t" style="left:1672.70px;top:1436px;font-size:14px;line-height:14px;color:#333333;letter-spacing:0.330px;-webkit-text-stroke:0.4px #333333;">End date</div>
<div class="t" style="left:50.10px;top:1478px;font-size:14px;line-height:14px;color:#197bd2;">1</div>
<div class="t" style="left:99.70px;top:1478px;font-size:14px;line-height:14px;color:#333333;letter-spacing:0.150px;">EXP-001</div>
<div class="t" style="left:182.00px;top:1478px;font-size:14px;line-height:14px;color:#333333;letter-spacing:0.150px;">01/01/2023</div>
<div class="t" style="left:328.30px;top:1478px;font-size:14px;line-height:14px;color:#333333;letter-spacing:0.150px;">--</div>
<div class="t" style="left:609.92px;top:1478px;font-size:14px;line-height:14px;color:#333333;">1</div>
<div class="t" style="left:656.82px;top:1478px;font-size:14px;line-height:14px;color:#333333;letter-spacing:0.150px;">100.00</div>
<div class="t" style="left:780.42px;top:1478px;font-size:14px;line-height:14px;color:#333333;letter-spacing:0.150px;">100.00</div>
<div class="t" style="left:838.80px;top:1478px;font-size:14px;line-height:14px;color:#333333;letter-spacing:0.150px;">In progress</div>
<div class="t" style="left:1018.20px;top:1478px;font-size:14px;line-height:14px;color:#197bd2;letter-spacing:0.150px;">View schedule 1</div>
<div class="t" style="left:1157.70px;top:1478px;font-size:14px;line-height:14px;color:#333333;letter-spacing:0.150px;">01/01/2023</div>
<div class="t" style="left:1260.70px;top:1478px;font-size:14px;line-height:14px;color:#333333;letter-spacing:0.150px;">12/31/2023</div>
<div class="t" style="left:1363.30px;top:1478px;font-size:14px;line-height:14px;color:#333333;letter-spacing:0.150px;">--</div>
<div class="t" style="left:1541.30px;top:1478px;font-size:14px;line-height:14px;color:#333333;letter-spacing:0.150px;">--</div>
<div class="t" style="left:1571.20px;top:1478px;font-size:14px;line-height:14px;color:#333333;letter-spacing:0.150px;">--</div>
<div class="t" style="left:1668.60px;top:1478px;font-size:14px;line-height:14px;color:#333333;letter-spacing:0.150px;">--</div>
</body></html>
